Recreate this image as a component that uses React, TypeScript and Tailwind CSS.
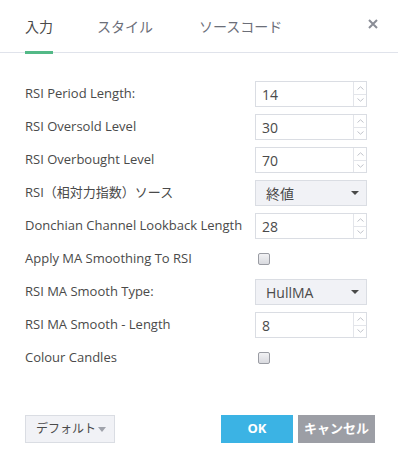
import React from "react";

const font = { fontFamily: "'Open Sans', 'Noto Sans CJK JP', sans-serif" };

function NumInput({ value }: { value: string }) {
  return (
    <div className="flex h-[26px] w-[112px] border border-[#dadde3] bg-white">
      <div className="flex flex-1 items-center pl-[6px] text-[14px] text-[#4a4a4a]">{value}</div>
      <div className="flex w-[13px] flex-col border-l border-[#e3e5ea]">
        <div className="flex flex-1 items-center justify-center">
          <svg width="7" height="4" viewBox="0 0 7 4"><path d="M0.5 3.5 L3.5 0.8 L6.5 3.5" fill="none" stroke="#b9bcc4" strokeWidth="0.9" /></svg>
        </div>
        <div className="h-px bg-[#e3e5ea]" />
        <div className="flex flex-1 items-center justify-center">
          <svg width="7" height="4" viewBox="0 0 7 4"><path d="M0.5 0.5 L3.5 3.2 L6.5 0.5" fill="none" stroke="#b9bcc4" strokeWidth="0.9" /></svg>
        </div>
      </div>
    </div>
  );
}

function Select({ value }: { value: string }) {
  return (
    <div className="flex h-[26px] w-[112px] items-center justify-between border border-[#dadde3] bg-[#f1f2f6] pl-[10px] pr-[7px] text-[14px] text-[#4a4a4a]">
      <span>{value}</span>
      <svg width="8" height="4" viewBox="0 0 8 4"><path d="M0 0 L8 0 L4 4 Z" fill="#4a4a4a" /></svg>
    </div>
  );
}

function Checkbox() {
  return (
    <div className="ml-[3px] h-[12px] w-[12px] rounded-[2px] border border-[#9a9ca3] bg-gradient-to-b from-[#f2f2f4] to-[#d9dadf]" />
  );
}

const rows: { label: string; control: React.ReactNode }[] = [
  { label: "RSI Period Length:", control: <NumInput value="14" /> },
  { label: "RSI Oversold Level", control: <NumInput value="30" /> },
  { label: "RSI Overbought Level", control: <NumInput value="70" /> },
  { label: "RSI（相対力指数）ソース", control: <Select value="終値" /> },
  { label: "Donchian Channel Lookback Length", control: <NumInput value="28" /> },
  { label: "Apply MA Smoothing To RSI", control: <Checkbox /> },
  { label: "RSI MA Smooth Type:", control: <Select value="HullMA" /> },
  { label: "RSI MA Smooth - Length", control: <NumInput value="8" /> },
  { label: "Colour Candles", control: <Checkbox /> },
];

export default function App() {
  return (
    <div className="flex h-[467px] w-[398px] flex-col bg-white" style={font}>
      <div className="relative flex h-[53px] items-start border-b border-[#e0e3eb] px-[25px]">
        <div className="relative flex h-[52px] items-center text-[14px] text-[#4a4a4a]">
          入力
          <div className="absolute bottom-[-2px] left-0 right-0 h-[3px] bg-[#53b987]" />
        </div>
        <div className="ml-[44px] flex h-[52px] items-center text-[14px] text-[#6b6e78]">スタイル</div>
        <div className="ml-[46px] flex h-[52px] items-center text-[14px] text-[#6b6e78]">ソースコード</div>
        <div className="absolute right-[20px] top-[19px]">
          <svg width="10" height="10" viewBox="0 0 10 10">
            <path d="M1 1 L9 9 M9 1 L1 9" stroke="#8a8d96" strokeWidth="2" />
          </svg>
        </div>
      </div>
      <div className="flex flex-col gap-[7px] px-[25px] pt-[28px]">
        {rows.map((r, i) => (
          <div key={i} className="flex h-[26px] items-center">
            <div className="w-[230px] whitespace-nowrap text-[13px] text-[#4a4a4a]">{r.label}</div>
            <div className="flex w-[112px] items-center">{r.control}</div>
          </div>
        ))}
      </div>
      <div className="mt-auto mb-[24px] flex items-center pl-[25px] pr-[23px]">
        <div className="flex h-[28px] w-[90px] items-center justify-between whitespace-nowrap border border-[#dadde3] bg-[#f1f2f6] pl-[10px] pr-[8px] text-[12px] text-[#4a4a4a]">
          <span>デフォルト</span>
          <svg width="8" height="5" viewBox="0 0 8 5"><path d="M0 0 L8 0 L4 5 Z" fill="#a0a3ab" /></svg>
        </div>
        <div className="ml-auto flex h-[28px] w-[72px] items-center justify-center bg-[#3bb3e4] text-[13px] font-bold text-white">OK</div>
        <div className="ml-[5px] flex h-[28px] w-[77px] items-center justify-center whitespace-nowrap bg-[#9c9ea5] text-[13px] font-bold text-white">キャンセル</div>
      </div>
    </div>
  );
}
